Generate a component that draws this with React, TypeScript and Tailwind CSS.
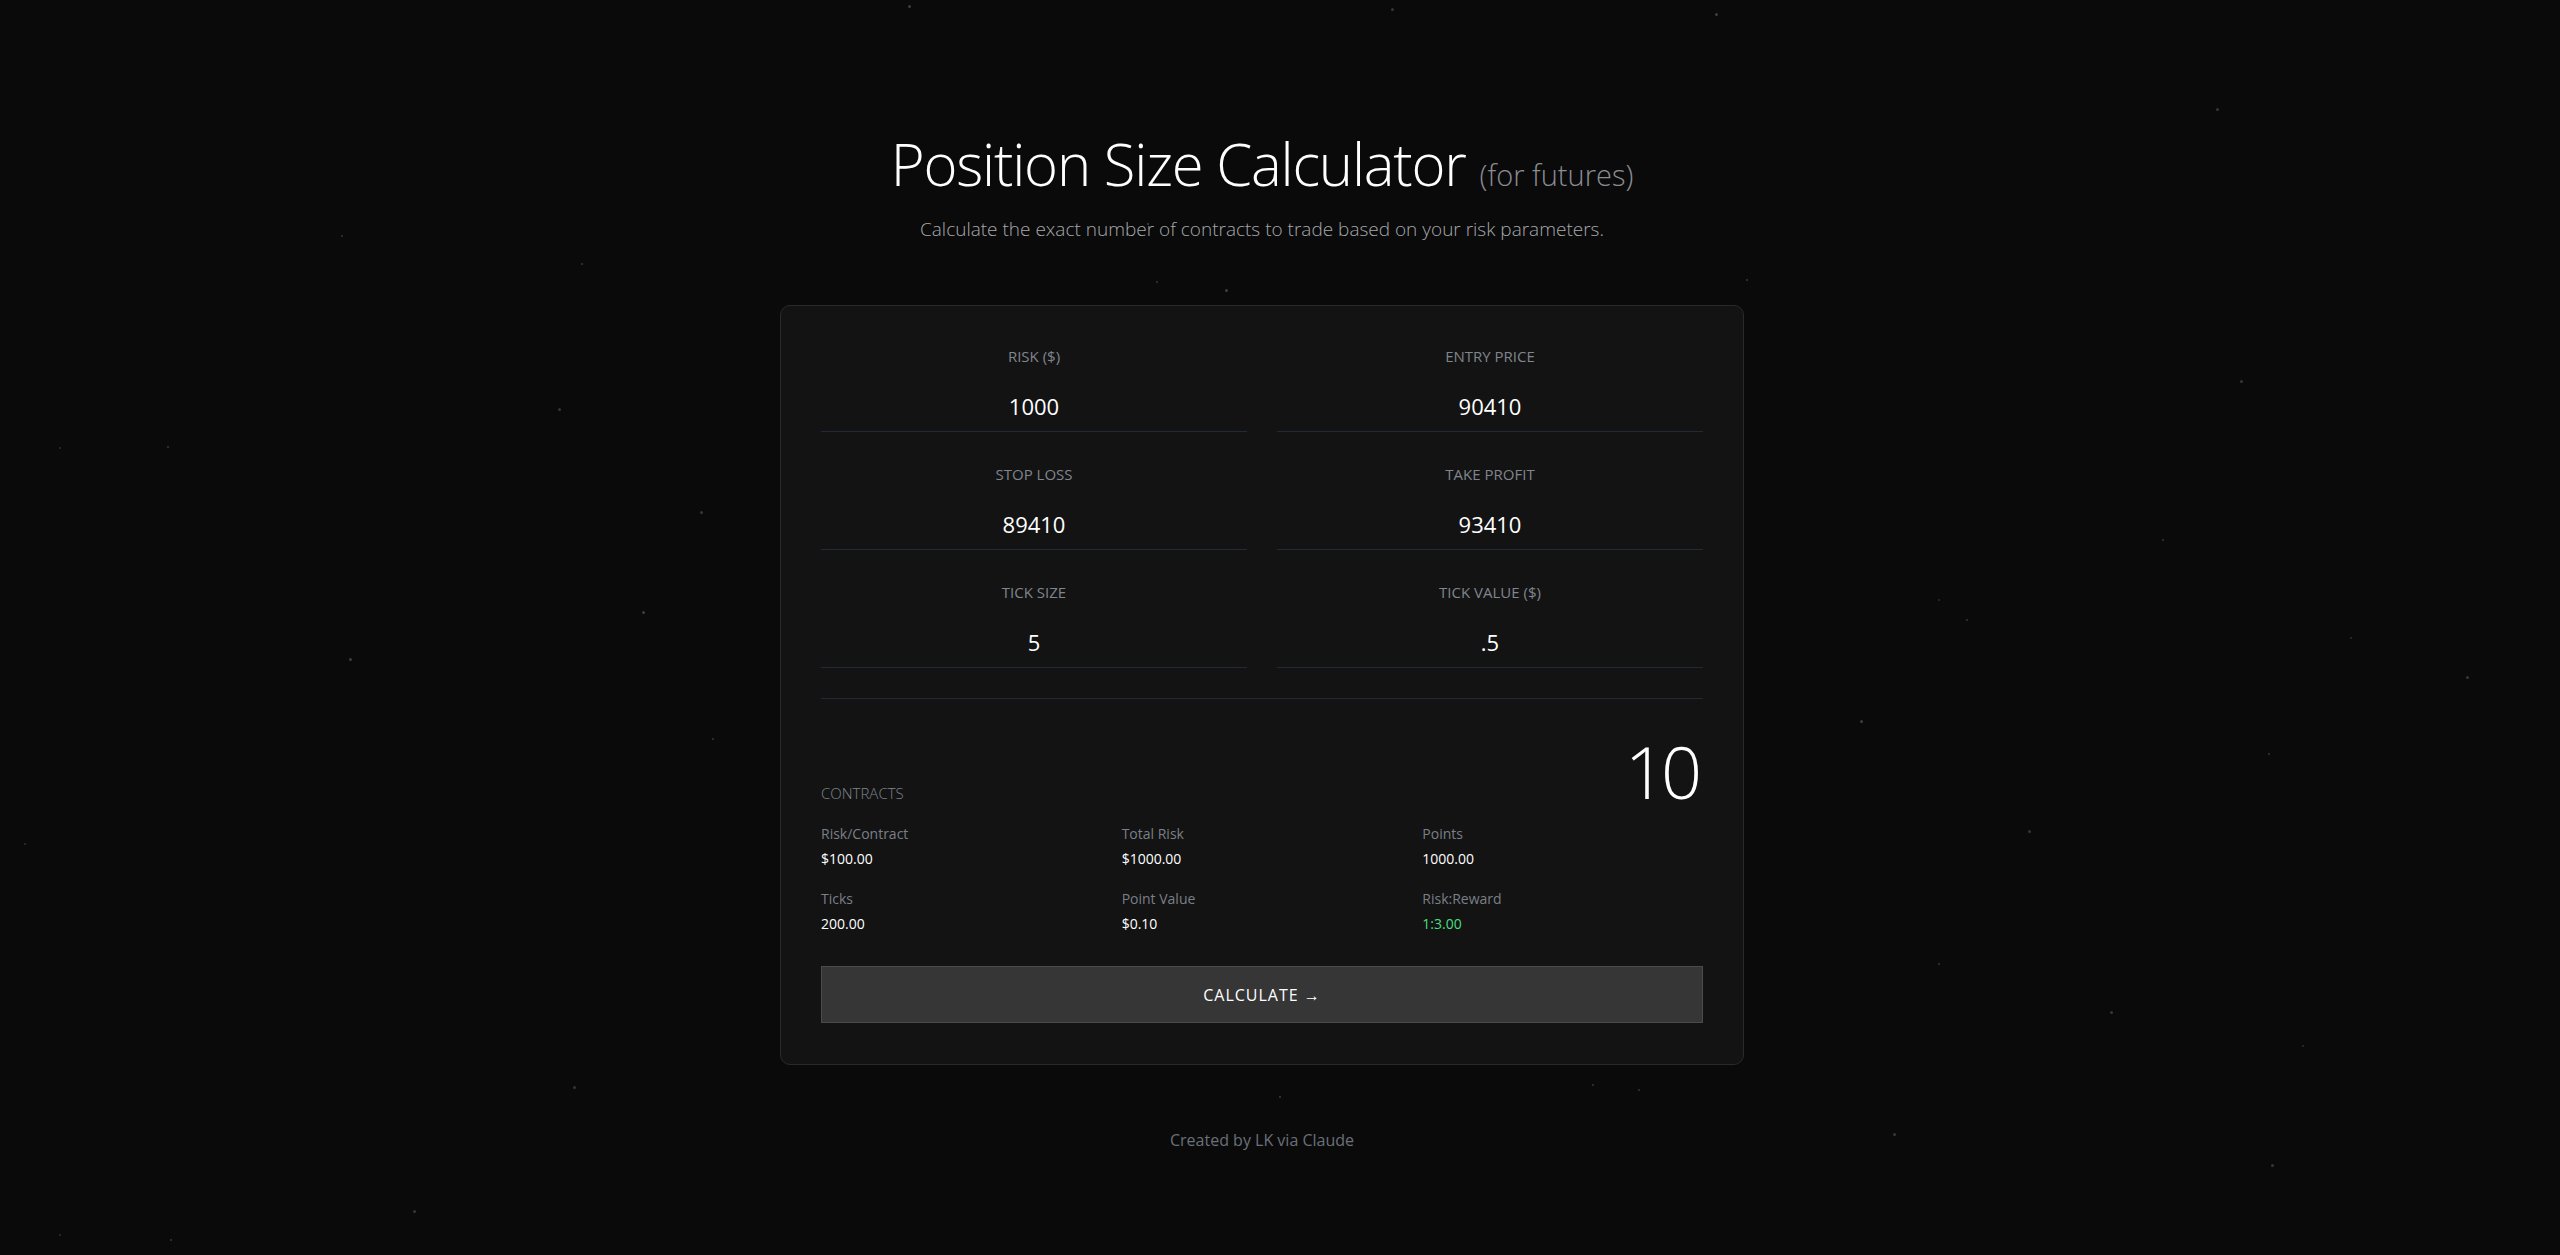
import { useState } from "react";

// background dots, placed roughly where they sit in the design
const stars = [
  { x: 908, y: 5, s: 3, o: 0.35 },
  { x: 1391, y: 8, s: 3, o: 0.3 },
  { x: 1715, y: 13, s: 3, o: 0.35 },
  { x: 2216, y: 108, s: 3, o: 0.3 },
  { x: 341, y: 235, s: 2, o: 0.3 },
  { x: 581, y: 263, s: 2, o: 0.3 },
  { x: 1147, y: 223, s: 2, o: 0.4 },
  { x: 1156, y: 281, s: 2, o: 0.3 },
  { x: 1225, y: 289, s: 3, o: 0.35 },
  { x: 1746, y: 279, s: 2, o: 0.3 },
  { x: 2240, y: 380, s: 3, o: 0.3 },
  { x: 558, y: 408, s: 3, o: 0.3 },
  { x: 59, y: 447, s: 2, o: 0.25 },
  { x: 167, y: 446, s: 2, o: 0.3 },
  { x: 700, y: 511, s: 3, o: 0.3 },
  { x: 2162, y: 539, s: 2, o: 0.3 },
  { x: 1938, y: 599, s: 2, o: 0.25 },
  { x: 642, y: 611, s: 3, o: 0.35 },
  { x: 1966, y: 619, s: 2, o: 0.3 },
  { x: 2350, y: 637, s: 2, o: 0.25 },
  { x: 349, y: 658, s: 3, o: 0.35 },
  { x: 2466, y: 676, s: 3, o: 0.3 },
  { x: 1860, y: 720, s: 3, o: 0.35 },
  { x: 712, y: 738, s: 2, o: 0.3 },
  { x: 2268, y: 753, s: 2, o: 0.3 },
  { x: 2028, y: 830, s: 3, o: 0.3 },
  { x: 24, y: 843, s: 2, o: 0.25 },
  { x: 1938, y: 963, s: 2, o: 0.3 },
  { x: 2110, y: 1011, s: 3, o: 0.3 },
  { x: 2302, y: 1045, s: 2, o: 0.25 },
  { x: 573, y: 1086, s: 3, o: 0.3 },
  { x: 1592, y: 1084, s: 2, o: 0.3 },
  { x: 1638, y: 1089, s: 2, o: 0.3 },
  { x: 1279, y: 1096, s: 2, o: 0.35 },
  { x: 1893, y: 1133, s: 3, o: 0.3 },
  { x: 2271, y: 1164, s: 3, o: 0.3 },
  { x: 413, y: 1210, s: 3, o: 0.3 },
  { x: 59, y: 1234, s: 2, o: 0.25 },
  { x: 170, y: 1239, s: 2, o: 0.3 },
];

type Inputs = {
  risk: string;
  entry: string;
  stop: string;
  target: string;
  tickSize: string;
  tickValue: string;
};

const fields: { key: keyof Inputs; label: string }[] = [
  { key: "risk", label: "RISK ($)" },
  { key: "entry", label: "ENTRY PRICE" },
  { key: "stop", label: "STOP LOSS" },
  { key: "target", label: "TAKE PROFIT" },
  { key: "tickSize", label: "TICK SIZE" },
  { key: "tickValue", label: "TICK VALUE ($)" },
];

const calculate = (v: Inputs) => {
  const risk = parseFloat(v.risk) || 0;
  const entry = parseFloat(v.entry) || 0;
  const stop = parseFloat(v.stop) || 0;
  const target = parseFloat(v.target) || 0;
  const tickSize = parseFloat(v.tickSize) || 1;
  const tickValue = parseFloat(v.tickValue) || 0;

  const points = Math.abs(entry - stop);
  const ticks = points / tickSize;
  const perContract = ticks * tickValue;
  const contracts = perContract > 0 ? Math.floor(risk / perContract) : 0;
  const reward = points > 0 ? Math.abs(target - entry) / points : 0;

  return {
    contracts,
    perContract,
    totalRisk: contracts * perContract,
    points,
    ticks,
    pointValue: tickValue / tickSize,
    reward,
  };
};

export default function App() {
  const [values, setValues] = useState<Inputs>({
    risk: "1000",
    entry: "90410",
    stop: "89410",
    target: "93410",
    tickSize: "5",
    tickValue: ".5",
  });
  const [result, setResult] = useState(() => calculate(values));

  const stats = [
    { label: "Risk/Contract", value: `$${result.perContract.toFixed(2)}` },
    { label: "Total Risk", value: `$${result.totalRisk.toFixed(2)}` },
    { label: "Points", value: result.points.toFixed(2) },
    { label: "Ticks", value: result.ticks.toFixed(2) },
    { label: "Point Value", value: `$${result.pointValue.toFixed(2)}` },
    { label: "Risk:Reward", value: `1:${result.reward.toFixed(2)}`, green: true },
  ];

  return (
    <div className="relative min-h-screen overflow-hidden bg-[#0a0a0a] font-['Open_Sans','Noto_Sans',sans-serif]">
      <div className="pointer-events-none absolute inset-0">
        {stars.map((s, i) => (
          <span
            key={i}
            className="absolute rounded-full bg-[#9aa0aa]"
            style={{ left: s.x, top: s.y, width: s.s, height: s.s, opacity: s.o }}
          />
        ))}
      </div>

      <main className="relative flex flex-col items-center pt-[135px] pr-[36px]">
        <h1 className="text-[58px] font-light leading-none tracking-[-1.2px] text-white">
          Position Size Calculator{" "}
          <span className="text-[29px] tracking-normal text-[#8a8d93]">(for futures)</span>
        </h1>
        <p className="mt-[22px] text-[19px] font-light leading-7 text-[#a6a8ad]">
          Calculate the exact number of contracts to trade based on your risk parameters.
        </p>

        <section className="mt-[62px] w-[964px] rounded-[10px] border border-[#2a2a2a] bg-[#131313] px-10 pt-10 pb-[41px]">
          <div className="grid grid-cols-2 gap-x-[30px] gap-y-8">
            {fields.map((f) => (
              <label key={f.key} className="flex flex-col">
                <span className="text-center text-[15px] leading-5 text-[#80858e]">{f.label}</span>
                <input
                  value={values[f.key]}
                  onChange={(e) => setValues({ ...values, [f.key]: e.target.value })}
                  className="mt-[10px] h-[56px] border-b border-[#232a37] bg-transparent pt-[4px] text-center text-[22px] text-white outline-none"
                />
              </label>
            ))}
          </div>

          <div className="mt-[30px] border-t border-[#222834] pt-[36px]">
            <div className="flex items-baseline justify-between">
              <span className="text-[15px] font-light text-[#80858e]">CONTRACTS</span>
              <span className="pr-[6px] text-[72px] font-light leading-none tracking-[-5px] text-white">
                {result.contracts}
              </span>
            </div>

            <div className="mt-[17px] grid grid-cols-3 gap-x-5 gap-y-5">
              {stats.map((s) => (
                <div key={s.label} className="flex flex-col">
                  <span className="text-[14px] leading-5 text-[#7a7f88]">{s.label}</span>
                  <span
                    className={`mt-[5px] text-[14px] leading-5 ${s.green ? "text-[#4ade80]" : "text-white"}`}
                  >
                    {s.value}
                  </span>
                </div>
              ))}
            </div>
          </div>

          <button
            onClick={() => setResult(calculate(values))}
            className="mt-[32px] h-[57px] w-full border border-[#4b4b4b] bg-[#363636] text-[16px] tracking-[1px] text-white"
          >
            CALCULATE →
          </button>
        </section>

        <footer className="mt-[63px] text-[16px] leading-6 text-[#6b7079]">Created by LK via Claude</footer>
      </main>
    </div>
  );
}
